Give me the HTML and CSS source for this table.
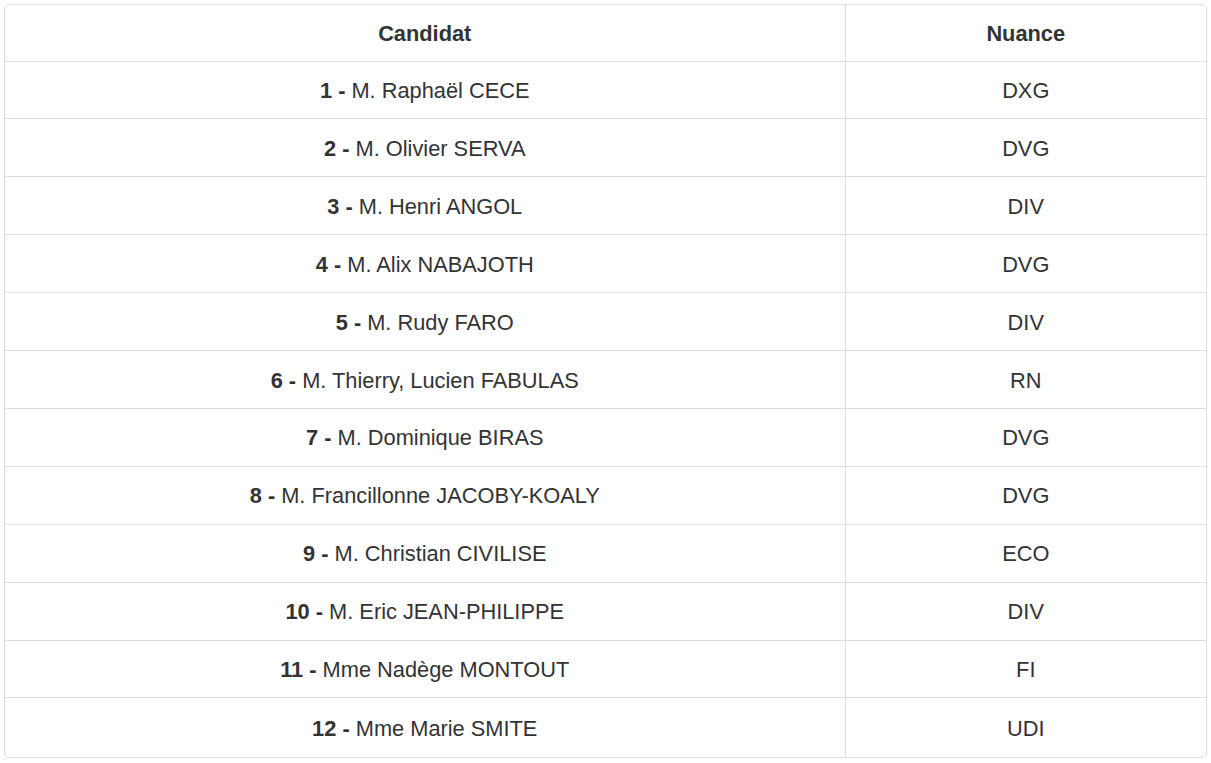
FILE: index.html
```html
<!DOCTYPE html>
<html lang="fr">
<head>
<meta charset="utf-8">
<title>Candidats</title>
<link rel="stylesheet" href="styles.css">
</head>
<body>
<div class="wrap">
  <div class="box">
    <table class="results">
      <thead>
        <tr><th class="c1">Candidat</th><th class="c2">Nuance</th></tr>
      </thead>
      <tbody>
        <tr><td class="c1"><b>1 -</b> M. Raphaël CECE</td><td class="c2">DXG</td></tr>
        <tr><td class="c1"><b>2 -</b> M. Olivier SERVA</td><td class="c2">DVG</td></tr>
        <tr><td class="c1"><b>3 -</b> M. Henri ANGOL</td><td class="c2">DIV</td></tr>
        <tr><td class="c1"><b>4 -</b> M. Alix NABAJOTH</td><td class="c2">DVG</td></tr>
        <tr><td class="c1"><b>5 -</b> M. Rudy FARO</td><td class="c2">DIV</td></tr>
        <tr><td class="c1"><b>6 -</b> M. Thierry, Lucien FABULAS</td><td class="c2">RN</td></tr>
        <tr><td class="c1"><b>7 -</b> M. Dominique BIRAS</td><td class="c2">DVG</td></tr>
        <tr><td class="c1"><b>8 -</b> M. Francillonne JACOBY-KOALY</td><td class="c2">DVG</td></tr>
        <tr><td class="c1"><b>9 -</b> M. Christian CIVILISE</td><td class="c2">ECO</td></tr>
        <tr><td class="c1"><b>10 -</b> M. Eric JEAN-PHILIPPE</td><td class="c2">DIV</td></tr>
        <tr><td class="c1"><b>11 -</b> Mme Nadège MONTOUT</td><td class="c2">FI</td></tr>
        <tr><td class="c1"><b>12 -</b> Mme Marie SMITE</td><td class="c2">UDI</td></tr>
      </tbody>
    </table>
  </div>
</div>
</body>
</html>
```

FILE: styles.css
```css
html, body {
  margin: 0;
  padding: 0;
  background: #fff;
}
.wrap {
  padding: 4px;
}
.box {
  border: 1px solid #dddddd;
  border-radius: 5px;
  overflow: hidden;
}
.results {
  width: 100%;
  border-collapse: collapse;
  table-layout: fixed;
  font-family: "Liberation Sans", Arial, sans-serif;
  font-size: 21.8px;
  color: #333333;
}
.results th,
.results td {
  text-align: center;
  padding: 2px 8px 0;
  line-height: 27.8px;
  vertical-align: middle;
}
.results th {
  font-weight: bold;
  height: 56px;
  box-sizing: border-box;
}
.results td {
  height: 57.92px;
  border-top: 1px solid #dddddd;
  box-sizing: border-box;
}
.results tr:last-child td {
  height: 59.5px;
}
.results .c1 {
  width: 840px;
}
.results .c2 {
  border-left: 1px solid #dddddd;
}
.results b {
  font-weight: bold;
}
```
